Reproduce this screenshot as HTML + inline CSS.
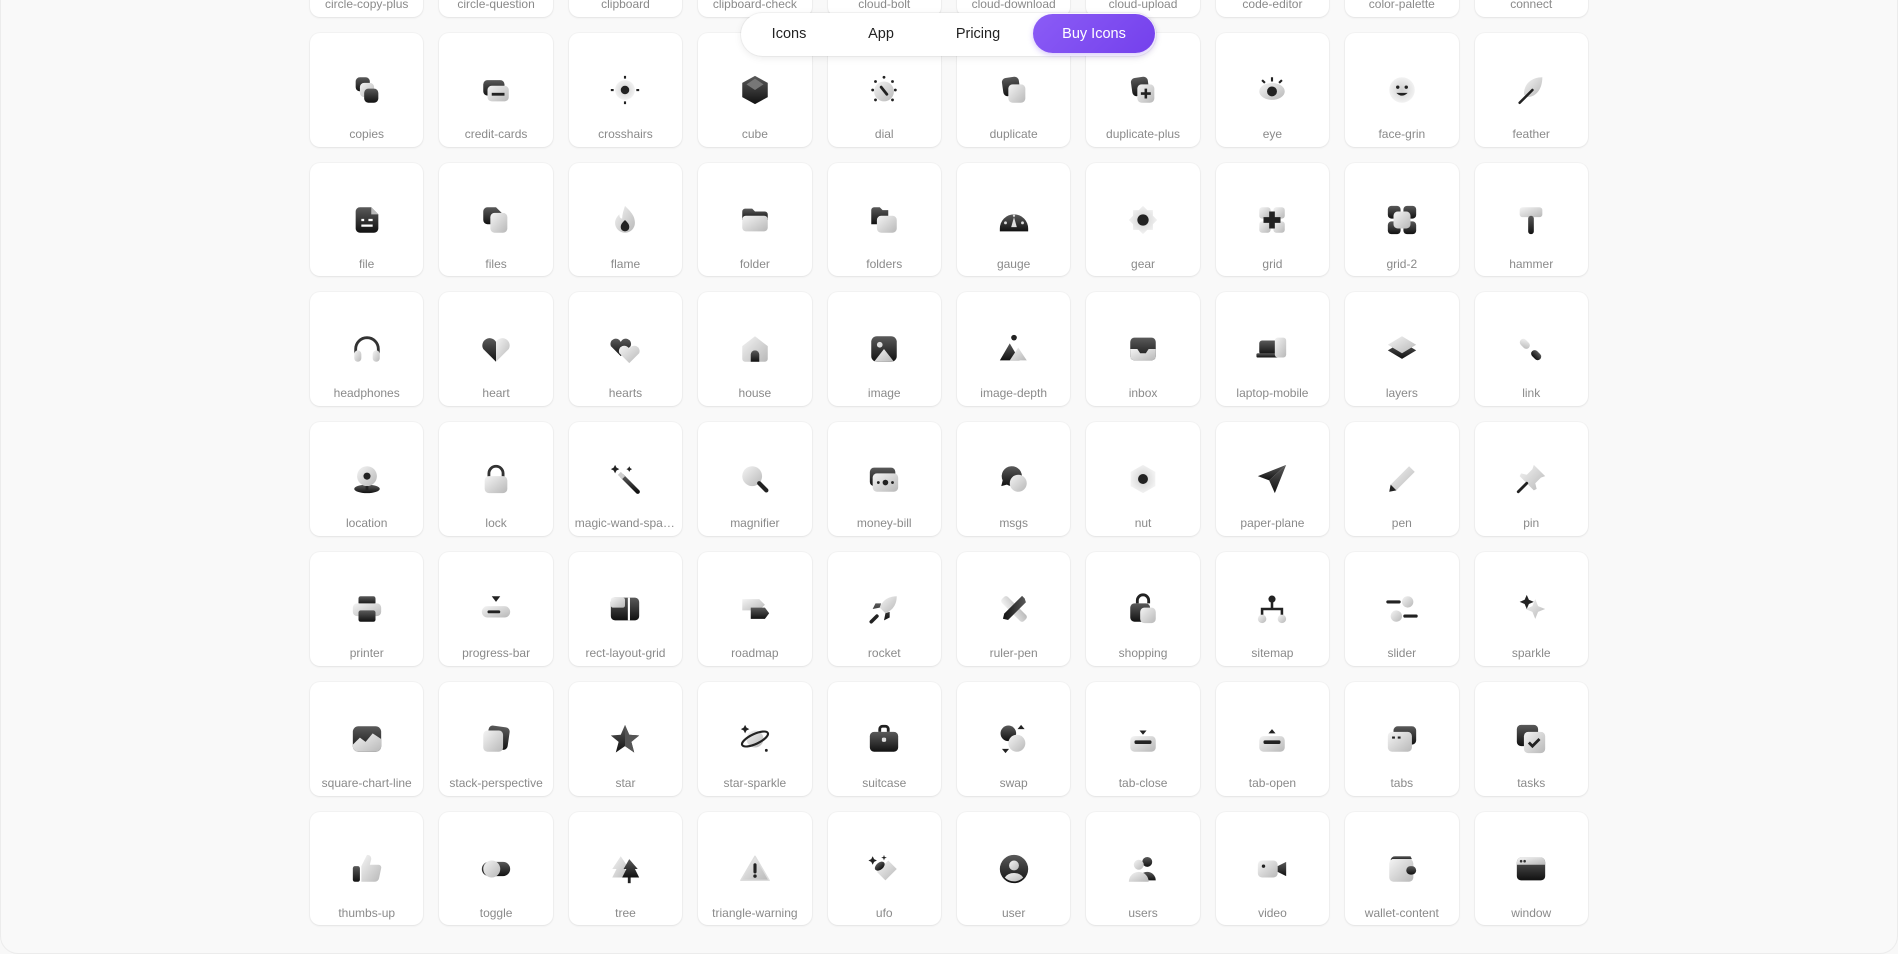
<!DOCTYPE html>
<html><head><meta charset="utf-8"><style>
html,body{margin:0;padding:0;width:1898px;height:954px;overflow:hidden;background:#f8f8f8;font-family:"Liberation Sans",sans-serif}
.frame{position:absolute;left:0;top:-20px;width:1896px;height:972px;border:1px solid #ececec;border-radius:18px;background:#f9f9f9}
.grid{position:absolute;left:310px;top:-97px;display:grid;grid-template-columns:repeat(10,113.4px);grid-auto-rows:113.8px;column-gap:16px;row-gap:16px}
.c{position:relative;background:#fff;border-radius:10px;box-shadow:0 1px 2px rgba(0,0,0,.07),0 0 0 1px rgba(0,0,0,.025)}
.c svg{position:absolute;left:39.7px;top:40px;width:34px;height:34px}
.c span{position:absolute;left:0;right:0;top:93px;text-align:center;font-size:12px;color:#8a8a8a;line-height:16px;white-space:nowrap;overflow:hidden;text-overflow:ellipsis;padding:0 6px}
.nav{position:absolute;left:741px;top:13px;width:415px;height:43px;background:#fff;border-radius:22px;box-shadow:0 2px 8px rgba(0,0,0,.08),0 0 0 1px rgba(0,0,0,.04)}
.nav a{position:absolute;top:1px;line-height:41px;font-size:14.5px;color:#222;text-decoration:none;transform:translateX(-50%)}
.buy{position:absolute;left:292px;top:1px;width:122px;height:39px;border-radius:20px;background:linear-gradient(135deg,#8b5cf6,#7440ec);color:#fff;font-size:14.5px;line-height:40px;text-align:center;box-shadow:0 2px 6px rgba(120,70,240,.3)}
</style></head><body>
<svg width="0" height="0" style="position:absolute"><defs>
<linearGradient id="d" x1="0" y1="0" x2="0" y2="1"><stop offset="0" stop-color="#5a5a5a"/><stop offset="1" stop-color="#111"/></linearGradient>
<linearGradient id="l" x1="0" y1="0" x2="1" y2="1"><stop offset="0" stop-color="#f4f4f4"/><stop offset="1" stop-color="#b8b8b8"/></linearGradient>
<radialGradient id="r"><stop offset="0" stop-color="#d0d0d0"/><stop offset="1" stop-color="#f2f2f2"/></radialGradient>
</defs></svg>
<div class="frame"></div>
<div class="grid">
<div class="c"><span>circle-copy-plus</span></div>
<div class="c"><span>circle-question</span></div>
<div class="c"><span>clipboard</span></div>
<div class="c"><span>clipboard-check</span></div>
<div class="c"><span>cloud-bolt</span></div>
<div class="c"><span>cloud-download</span></div>
<div class="c"><span>cloud-upload</span></div>
<div class="c"><span>code-editor</span></div>
<div class="c"><span>color-palette</span></div>
<div class="c"><span>connect</span></div>

<div class="c"><svg viewBox="0 0 24 24"><rect x="4" y="3" width="10" height="10" rx="3" fill="url(#d)"/><rect x="7" y="7" width="10" height="10" rx="3" fill="url(#l)"/><rect x="10" y="11" width="10" height="10" rx="3" fill="url(#d)"/></svg><span>copies</span></div>
<div class="c"><svg viewBox="0 0 24 24"><rect x="3" y="5" width="15" height="11" rx="3" fill="url(#d)"/><rect x="6" y="9" width="15" height="11" rx="3" fill="url(#l)"/><rect x="9" y="14" width="9" height="2" fill="#222"/></svg><span>credit-cards</span></div>
<div class="c"><svg viewBox="0 0 24 24"><circle cx="12" cy="12" r="7" fill="url(#r)"/><circle cx="12" cy="12" r="3" fill="#222"/><path d="M12 2v2M12 20v2M2 12h2M20 12h2" stroke="#222" stroke-width="1.5"/></svg><span>crosshairs</span></div>
<div class="c"><svg viewBox="0 0 24 24"><path d="M12 2 21 7v10l-9 5-9-5V7z" fill="url(#d)"/><path d="M12 4 18 8 12 12 6 8z" fill="#777"/></svg><span>cube</span></div>
<div class="c"><svg viewBox="0 0 24 24"><circle cx="12" cy="13" r="7" fill="url(#l)"/><path d="M10 10l4 5" stroke="#222" stroke-width="2" stroke-linecap="round"/><g fill="#222"><circle cx="12" cy="3" r="1"/><circle cx="4" cy="12" r="1"/><circle cx="20" cy="12" r="1"/><circle cx="6" cy="6" r="1"/><circle cx="18" cy="6" r="1"/><circle cx="6" cy="19" r="1"/><circle cx="18" cy="19" r="1"/></g></svg><span>dial</span></div>
<div class="c"><svg viewBox="0 0 24 24"><rect x="4" y="3" width="12" height="13" rx="3" fill="url(#d)" transform="rotate(-8 10 10)"/><rect x="8" y="8" width="12" height="13" rx="3" fill="url(#l)"/></svg><span>duplicate</span></div>
<div class="c"><svg viewBox="0 0 24 24"><rect x="4" y="3" width="12" height="13" rx="3" fill="url(#d)" transform="rotate(-8 10 10)"/><rect x="8" y="8" width="12" height="13" rx="3" fill="url(#l)"/><path d="M14 11v7M10.5 14.5h7" stroke="#222" stroke-width="1.8"/></svg><span>duplicate-plus</span></div>
<div class="c"><svg viewBox="0 0 24 24"><ellipse cx="12" cy="13" rx="9" ry="6" fill="url(#l)"/><circle cx="12" cy="13" r="3.5" fill="#222"/><path d="M12 3v3M5 5l2 2M19 5l-2 2" stroke="#222" stroke-width="1.5"/></svg><span>eye</span></div>
<div class="c"><svg viewBox="0 0 24 24"><circle cx="12" cy="12" r="9" fill="url(#r)"/><circle cx="9" cy="10" r="1.2" fill="#222"/><circle cx="15" cy="10" r="1.2" fill="#222"/><path d="M8 14q4 4 8 0z" fill="#222"/></svg><span>face-grin</span></div>
<div class="c"><svg viewBox="0 0 24 24"><path d="M20 3C12 3 7 8 7 15l2 2c7 0 11-6 11-14z" fill="url(#l)"/><path d="M4 21 13 12" stroke="#222" stroke-width="1.8" stroke-linecap="round"/></svg><span>feather</span></div>

<div class="c"><svg viewBox="0 0 24 24"><path d="M7 3h8l5 5v10a3 3 0 0 1-3 3H7a3 3 0 0 1-3-3V6a3 3 0 0 1 3-3z" fill="url(#d)"/><path d="M15 3v5h5z" fill="#bbb"/><path d="M8 12h2M13 12h3M8 16h8" stroke="#fff" stroke-width="1.6"/></svg><span>file</span></div>
<div class="c"><svg viewBox="0 0 24 24"><path d="M6 3h6l4 4v8H6a3 3 0 0 1-3-3V6a3 3 0 0 1 3-3z" fill="url(#d)"/><rect x="8" y="7" width="12" height="14" rx="3" fill="url(#l)"/></svg><span>files</span></div>
<div class="c"><svg viewBox="0 0 24 24"><path d="M12 2c4 4 7 7 7 12a7 7 0 0 1-14 0c0-3 2-5 3-6 0 2 1 3 2 3 0-3 1-6 2-9z" fill="url(#l)"/><path d="M12 12c2 2 3 3 3 5a3 3 0 0 1-6 0c0-2 1-3 3-5z" fill="#222"/></svg><span>flame</span></div>
<div class="c"><svg viewBox="0 0 24 24"><path d="M3 6a2 2 0 0 1 2-2h5l2 2h7a2 2 0 0 1 2 2v4H3z" fill="url(#d)"/><rect x="3" y="9" width="18" height="11" rx="2.5" fill="url(#l)"/></svg><span>folder</span></div>
<div class="c"><svg viewBox="0 0 24 24"><path d="M3 5a2 2 0 0 1 2-2h4l2 2h4v10H3z" fill="url(#d)"/><rect x="7" y="9" width="14" height="12" rx="3" fill="url(#l)"/></svg><span>folders</span></div>
<div class="c"><svg viewBox="0 0 24 24"><path d="M2 18a10 10 0 0 1 20 0v2H2z" fill="url(#d)"/><path d="M12 10l-2 7h4z" fill="#ddd"/><g fill="#ddd"><circle cx="6" cy="14" r="1"/><circle cx="18" cy="14" r="1"/><circle cx="12" cy="9" r="0.8"/></g></svg><span>gauge</span></div>
<div class="c"><svg viewBox="0 0 24 24"><path d="M12 2l3 3h4v4l3 3-3 3v4h-4l-3 3-3-3H5v-4l-3-3 3-3V5h4z" fill="url(#r)"/><circle cx="12" cy="12" r="4" fill="#222"/></svg><span>gear</span></div>
<div class="c"><svg viewBox="0 0 24 24"><rect x="3" y="3" width="8" height="8" rx="2" fill="url(#l)"/><rect x="13" y="13" width="8" height="8" rx="2" fill="url(#l)"/><rect x="13" y="3" width="8" height="8" rx="2" fill="url(#l)"/><rect x="3" y="13" width="8" height="8" rx="2" fill="url(#l)"/><path d="M12 6v12M6 12h12" stroke="#222" stroke-width="4"/></svg><span>grid</span></div>
<div class="c"><svg viewBox="0 0 24 24"><rect x="2" y="2" width="9" height="9" rx="2.5" fill="url(#d)"/><rect x="13" y="2" width="9" height="9" rx="2.5" fill="url(#d)"/><rect x="2" y="13" width="9" height="9" rx="2.5" fill="url(#d)"/><rect x="13" y="13" width="9" height="9" rx="2.5" fill="url(#d)"/><rect x="6" y="6" width="12" height="12" rx="3" fill="url(#l)"/></svg><span>grid-2</span></div>
<div class="c"><svg viewBox="0 0 24 24"><rect x="4" y="3" width="16" height="7" rx="2" fill="url(#l)"/><rect x="10" y="9" width="4" height="13" rx="2" fill="url(#d)"/></svg><span>hammer</span></div>

<div class="c"><svg viewBox="0 0 24 24"><path d="M4 15v-3a8 8 0 0 1 16 0v3" fill="none" stroke="#333" stroke-width="2"/><rect x="3" y="13" width="5" height="8" rx="2.5" fill="url(#l)"/><rect x="16" y="13" width="5" height="8" rx="2.5" fill="url(#l)"/></svg><span>headphones</span></div>
<div class="c"><svg viewBox="0 0 24 24"><path d="M12 21 3 12a4.5 4.5 0 0 1 9-5z" fill="url(#d)"/><path d="M12 21 21 12a4.5 4.5 0 0 0-9-5z" fill="url(#l)"/></svg><span>heart</span></div>
<div class="c"><svg viewBox="0 0 24 24"><path d="M9 17 2 10a3.8 3.8 0 0 1 7-3 3.8 3.8 0 0 1 7 3z" fill="url(#d)"/><path d="M15 22 8 15a3.8 3.8 0 0 1 7-3 3.8 3.8 0 0 1 7 3z" fill="url(#l)"/></svg><span>hearts</span></div>
<div class="c"><svg viewBox="0 0 24 24"><path d="M12 3 21 10v9a2 2 0 0 1-2 2H5a2 2 0 0 1-2-2v-9z" fill="url(#l)"/><path d="M9 21v-5a3 3 0 0 1 6 0v5z" fill="url(#d)"/></svg><span>house</span></div>
<div class="c"><svg viewBox="0 0 24 24"><rect x="3" y="3" width="18" height="18" rx="4" fill="url(#d)"/><circle cx="9" cy="9" r="2" fill="#ddd"/><path d="M5 21l7-9 7 9z" fill="url(#l)"/></svg><span>image</span></div>
<div class="c"><svg viewBox="0 0 24 24"><path d="M2 20 9 8l7 12z" fill="url(#d)"/><path d="M9 20 15 11l6 9z" fill="url(#l)"/><circle cx="12" cy="4" r="2" fill="#222"/></svg><span>image-depth</span></div>
<div class="c"><svg viewBox="0 0 24 24"><rect x="3" y="4" width="18" height="16" rx="3" fill="url(#d)"/><path d="M3 12h5l2 3h4l2-3h5v5a3 3 0 0 1-3 3H6a3 3 0 0 1-3-3z" fill="url(#l)"/></svg><span>inbox</span></div>
<div class="c"><svg viewBox="0 0 24 24"><rect x="3" y="6" width="13" height="10" rx="2" fill="url(#d)"/><rect x="1" y="15" width="17" height="3" rx="1" fill="url(#d)"/><rect x="14" y="4" width="8" height="14" rx="2" fill="url(#l)"/></svg><span>laptop-mobile</span></div>
<div class="c"><svg viewBox="0 0 24 24"><path d="M12 7 22 13 12 19 2 13z" fill="url(#d)"/><path d="M12 3 22 9 12 15 2 9z" fill="url(#l)"/></svg><span>layers</span></div>
<div class="c"><svg viewBox="0 0 24 24"><rect x="4" y="6" width="8" height="5" rx="2.5" fill="url(#l)" transform="rotate(45 8 8)"/><rect x="12" y="14" width="8" height="5" rx="2.5" fill="url(#d)" transform="rotate(45 16 16)"/></svg><span>link</span></div>

<div class="c"><svg viewBox="0 0 24 24"><ellipse cx="12" cy="19" rx="9" ry="3" fill="url(#d)"/><circle cx="12" cy="10" r="7" fill="url(#l)"/><circle cx="12" cy="10" r="2.5" fill="#222"/><path d="M12 17v3" stroke="#222" stroke-width="2"/></svg><span>location</span></div>
<div class="c"><svg viewBox="0 0 24 24"><path d="M7 11V8a5 5 0 0 1 10 0v3" fill="none" stroke="#333" stroke-width="2"/><rect x="4" y="10" width="16" height="12" rx="3" fill="url(#l)"/></svg><span>lock</span></div>
<div class="c"><svg viewBox="0 0 24 24"><path d="M10 10 21 21" stroke="url(#d)" stroke-width="3" stroke-linecap="round"/><path d="M8 8l3 3" stroke="#ccc" stroke-width="3"/><path d="M5 2l1 2 2 1-2 1-1 2-1-2-2-1 2-1zM15 3l.7 1.3L17 5l-1.3.7L15 7l-.7-1.3L13 5l1.3-.7z" fill="#222"/></svg><span>magic-wand-sparkle</span></div>
<div class="c"><svg viewBox="0 0 24 24"><circle cx="10" cy="10" r="7" fill="url(#l)"/><path d="M15 15l5 5" stroke="#222" stroke-width="3" stroke-linecap="round"/></svg><span>magnifier</span></div>
<div class="c"><svg viewBox="0 0 24 24"><rect x="2" y="4" width="18" height="13" rx="3" fill="url(#d)"/><rect x="4" y="8" width="18" height="13" rx="3" fill="url(#l)"/><circle cx="13" cy="14.5" r="2" fill="#222"/><circle cx="8" cy="14.5" r="1" fill="#222"/><circle cx="18" cy="14.5" r="1" fill="#222"/></svg><span>money-bill</span></div>
<div class="c"><svg viewBox="0 0 24 24"><path d="M10 3a7 7 0 0 0-6 10l-1 4 4-1a7 7 0 1 0 3-13z" fill="url(#d)"/><circle cx="15" cy="15" r="6" fill="url(#l)"/></svg><span>msgs</span></div>
<div class="c"><svg viewBox="0 0 24 24"><path d="M12 2l8.7 5v10L12 22l-8.7-5V7z" fill="url(#r)"/><circle cx="12" cy="12" r="3.5" fill="#222"/></svg><span>nut</span></div>
<div class="c"><svg viewBox="0 0 24 24"><path d="M22 2 2 10l8 3z" fill="url(#d)"/><path d="M22 2 10 13l4 9z" fill="url(#d)"/></svg><span>paper-plane</span></div>
<div class="c"><svg viewBox="0 0 24 24"><path d="M17 3l4 4L8 20l-5 1 1-5z" fill="url(#l)"/><path d="M4 16l4 4-5 1z" fill="#222"/></svg><span>pen</span></div>
<div class="c"><svg viewBox="0 0 24 24"><path d="M14 2l8 8-3 1-4 4 1 4-2 1-10-10 1-2 4 1 4-4z" fill="url(#l)"/><path d="M3 21l6-6" stroke="#222" stroke-width="2" stroke-linecap="round"/></svg><span>pin</span></div>

<div class="c"><svg viewBox="0 0 24 24"><rect x="6" y="3" width="12" height="6" rx="1.5" fill="url(#d)"/><rect x="2" y="8" width="20" height="9" rx="3" fill="url(#l)"/><rect x="6" y="13" width="12" height="8" rx="1.5" fill="url(#d)"/></svg><span>printer</span></div>
<div class="c"><svg viewBox="0 0 24 24"><path d="M9 3h6l-3 4z" fill="#222"/><rect x="2" y="10" width="20" height="8" rx="4" fill="url(#l)"/><rect x="6" y="13" width="9" height="2" rx="1" fill="#222"/></svg><span>progress-bar</span></div>
<div class="c"><svg viewBox="0 0 24 24"><rect x="2" y="4" width="20" height="16" rx="3" fill="url(#d)"/><rect x="2" y="4" width="10" height="7" rx="1.5" fill="url(#l)"/><rect x="14" y="4" width="1.5" height="16" fill="#fff"/></svg><span>rect-layout-grid</span></div>
<div class="c"><svg viewBox="0 0 24 24"><path d="M3 5h12l4 4-4 4H3z" fill="url(#l)"/><path d="M9 11h10l3 4-3 4H9z" fill="url(#d)"/></svg><span>roadmap</span></div>
<div class="c"><svg viewBox="0 0 24 24"><path d="M21 3c-6 0-10 3-12 8l4 4c5-2 8-6 8-12z" fill="url(#l)"/><path d="M9 11l-5 1 2-4 4 0zM13 15l-1 5 4-2v-4z" fill="url(#d)"/><path d="M7 17l-4 4" stroke="#222" stroke-width="2.5" stroke-linecap="round"/></svg><span>rocket</span></div>
<div class="c"><svg viewBox="0 0 24 24"><rect x="9" y="1" width="6" height="22" rx="2" fill="url(#l)" transform="rotate(-45 12 12)"/><path d="M4 4l3-1 14 14-1 4-4-1L2 6z" fill="url(#d)" transform="rotate(90 12 12) scale(.9) translate(1 1)"/></svg><span>ruler-pen</span></div>
<div class="c"><svg viewBox="0 0 24 24"><path d="M8 8V6a4 4 0 0 1 8 0v2" fill="none" stroke="#222" stroke-width="2"/><rect x="3" y="8" width="14" height="13" rx="3" fill="url(#d)"/><rect x="10" y="11" width="11" height="11" rx="3" fill="url(#l)"/></svg><span>shopping</span></div>
<div class="c"><svg viewBox="0 0 24 24"><path d="M12 7v5M5 17v-5h14v5" fill="none" stroke="#222" stroke-width="1.8"/><circle cx="12" cy="5" r="2.5" fill="#222"/><circle cx="5" cy="19" r="3" fill="url(#l)"/><circle cx="19" cy="19" r="3" fill="url(#l)"/></svg><span>sitemap</span></div>
<div class="c"><svg viewBox="0 0 24 24"><path d="M2 7h8M14 17h8" stroke="#222" stroke-width="2.2" stroke-linecap="round"/><circle cx="16" cy="7" r="4" fill="url(#l)"/><circle cx="8" cy="17" r="4" fill="url(#l)"/></svg><span>slider</span></div>
<div class="c"><svg viewBox="0 0 24 24"><path d="M15 5l2 5 5 2-5 2-2 5-2-5-5-2 5-2z" fill="url(#l)"/><path d="M9 2l1.5 3.5L14 7l-3.5 1.5L9 12 7.5 8.5 4 7l3.5-1.5z" fill="#222"/></svg><span>sparkle</span></div>

<div class="c"><svg viewBox="0 0 24 24"><rect x="2" y="3" width="20" height="18" rx="4" fill="url(#d)"/><path d="M2 16l5-5 4 3 5-6 6 4v5a4 4 0 0 1-4 4H6a4 4 0 0 1-4-4z" fill="url(#l)"/></svg><span>square-chart-line</span></div>
<div class="c"><svg viewBox="0 0 24 24"><rect x="6" y="3" width="15" height="16" rx="3" fill="url(#d)" transform="rotate(8 13 11)"/><rect x="3" y="6" width="14" height="15" rx="3" fill="url(#l)"/></svg><span>stack-perspective</span></div>
<div class="c"><svg viewBox="0 0 24 24"><path d="M12 2l3 7 7 .5-5.5 4.5 2 7.5L12 17l-6.5 4.5 2-7.5L2 9.5 9 9z" fill="url(#d)"/><path d="M12 2l3 7 7 .5-5.5 4.5 2 7.5L12 17z" fill="#555"/></svg><span>star</span></div>
<div class="c"><svg viewBox="0 0 24 24"><circle cx="12" cy="12" r="6" fill="url(#l)"/><ellipse cx="12" cy="12" rx="10" ry="3.5" fill="none" stroke="#222" stroke-width="1.5" transform="rotate(-25 12 12)"/><path d="M5 2l1 2 2 1-2 1-1 2-1-2-2-1 2-1z" fill="#222"/><circle cx="20" cy="20" r="1" fill="#222"/></svg><span>star-sparkle</span></div>
<div class="c"><svg viewBox="0 0 24 24"><path d="M9 7V5a2 2 0 0 1 2-2h2a2 2 0 0 1 2 2v2" fill="none" stroke="#222" stroke-width="2"/><rect x="2" y="7" width="20" height="14" rx="3" fill="url(#d)"/><rect x="10.5" y="11" width="3" height="3" rx="1" fill="#ddd"/></svg><span>suitcase</span></div>
<div class="c"><svg viewBox="0 0 24 24"><circle cx="8" cy="8" r="5.5" fill="url(#d)"/><circle cx="14" cy="15" r="6" fill="url(#l)"/><path d="M17 2l2.5 3h-5zM6 22l-2.5-3h5z" fill="#222"/></svg><span>swap</span></div>
<div class="c"><svg viewBox="0 0 24 24"><path d="M12 9l-2.5-3h5z" fill="#222"/><rect x="3" y="10" width="18" height="11" rx="3" fill="url(#l)"/><rect x="6" y="13" width="12" height="2.5" rx="1" fill="#222"/></svg><span>tab-close</span></div>
<div class="c"><svg viewBox="0 0 24 24"><path d="M12 5l-2.5 3h5z" fill="#222"/><rect x="3" y="10" width="18" height="11" rx="3" fill="url(#l)"/><rect x="6" y="13" width="12" height="2.5" rx="1" fill="#222"/></svg><span>tab-open</span></div>
<div class="c"><svg viewBox="0 0 24 24"><rect x="6" y="3" width="16" height="13" rx="3" fill="url(#d)"/><rect x="2" y="7" width="17" height="14" rx="3" fill="url(#l)"/><path d="M5 11h2M9 11h2" stroke="#222" stroke-width="1.5"/></svg><span>tabs</span></div>
<div class="c"><svg viewBox="0 0 24 24"><rect x="2" y="2" width="15" height="15" rx="3" fill="url(#d)"/><rect x="7" y="7" width="15" height="15" rx="3" fill="url(#l)"/><path d="M10.5 14.5l2.5 2.5 5-5" fill="none" stroke="#222" stroke-width="2"/></svg><span>tasks</span></div>

<div class="c"><svg viewBox="0 0 24 24"><rect x="2" y="10" width="5" height="11" rx="1.5" fill="url(#d)"/><path d="M8 10l4-8c2 0 3 1 3 3l-1 4h6a2 2 0 0 1 2 2.5l-1.5 7A3 3 0 0 1 17.5 21H8z" fill="url(#l)"/></svg><span>thumbs-up</span></div>
<div class="c"><svg viewBox="0 0 24 24"><rect x="2" y="7" width="20" height="10" rx="5" fill="url(#d)"/><circle cx="9" cy="12" r="6" fill="url(#l)"/></svg><span>toggle</span></div>
<div class="c"><svg viewBox="0 0 24 24"><path d="M9 3 3 12h3l-3 6h12l-3-6h3z" fill="url(#l)"/><path d="M15 5l-4 7h2l-3 6h12l-3-6h2z" fill="url(#d)"/><rect x="14" y="18" width="2" height="4" fill="#222"/></svg><span>tree</span></div>
<div class="c"><svg viewBox="0 0 24 24"><path d="M12 3 22 20H2z" fill="url(#l)" stroke="#ddd" stroke-linejoin="round"/><path d="M12 9v5" stroke="#222" stroke-width="2.2" stroke-linecap="round"/><circle cx="12" cy="17" r="1.2" fill="#222"/></svg><span>triangle-warning</span></div>
<div class="c"><svg viewBox="0 0 24 24"><path d="M7 14l8-8 6 6-8 8z" fill="url(#l)"/><ellipse cx="9" cy="10" rx="4" ry="2.5" fill="url(#d)" transform="rotate(-40 9 10)"/><path d="M4 3l1 2 2 1-2 1-1 2-1-2-2-1 2-1zM12 2l.5 1.5L14 4l-1.5.5L12 6l-.5-1.5L10 4l1.5-.5z" fill="#222"/></svg><span>ufo</span></div>
<div class="c"><svg viewBox="0 0 24 24"><circle cx="12" cy="12" r="10" fill="url(#d)"/><circle cx="12" cy="9.5" r="3.5" fill="url(#l)"/><path d="M5.5 18a7 5 0 0 1 13 0 9 9 0 0 1-13 0z" fill="url(#l)"/></svg><span>user</span></div>
<div class="c"><svg viewBox="0 0 24 24"><circle cx="15" cy="7" r="3.5" fill="url(#d)"/><path d="M9 20a6 6 0 0 1 12 0z" fill="url(#d)"/><circle cx="9" cy="9" r="3.5" fill="url(#l)"/><path d="M2 21a7 7 0 0 1 14 0z" fill="url(#l)"/></svg><span>users</span></div>
<div class="c"><svg viewBox="0 0 24 24"><rect x="2" y="6" width="14" height="12" rx="3" fill="url(#l)"/><path d="M16 10l6-3v10l-6-3z" fill="url(#d)"/><circle cx="6" cy="10" r="1.2" fill="#222"/></svg><span>video</span></div>
<div class="c"><svg viewBox="0 0 24 24"><path d="M4 6a3 3 0 0 1 3-3h11l1 2H5z" fill="url(#d)"/><rect x="3" y="5" width="17" height="16" rx="3" fill="url(#l)"/><rect x="15" y="10" width="7" height="6" rx="3" fill="url(#d)"/></svg><span>wallet-content</span></div>
<div class="c"><svg viewBox="0 0 24 24"><rect x="2" y="4" width="20" height="16" rx="3" fill="url(#d)"/><path d="M2 7a3 3 0 0 1 3-3h14a3 3 0 0 1 3 3v2H2z" fill="url(#l)"/><circle cx="5" cy="6.5" r=".9" fill="#333"/><circle cx="7.5" cy="6.5" r=".9" fill="#333"/></svg><span>window</span></div>
</div>
<div class="nav"><a style="left:48px">Icons</a><a style="left:140px">App</a><a style="left:237px">Pricing</a><div class="buy">Buy Icons</div></div>
</body></html>
